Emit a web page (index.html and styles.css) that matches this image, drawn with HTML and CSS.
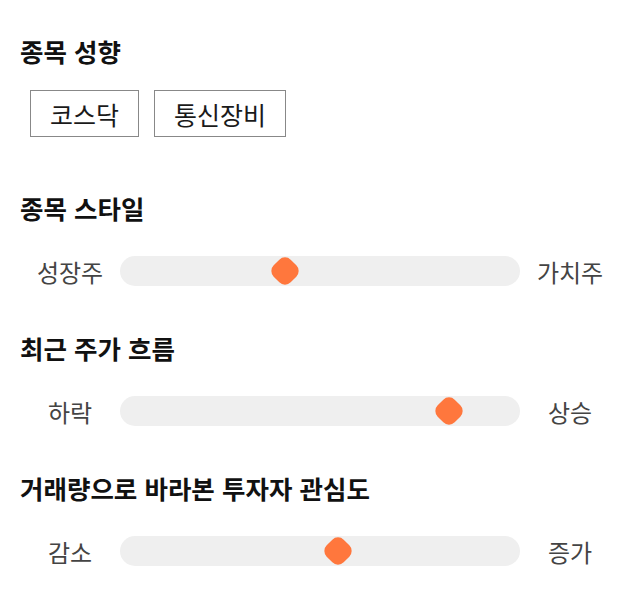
FILE: index.html
```html
<!DOCTYPE html>
<html lang="ko">
<head>
<meta charset="utf-8">
<link rel="stylesheet" href="styles.css">
</head>
<body>
<div class="page">
  <section class="section first">
    <h2 class="title">종목 성향</h2>
    <div class="tags">
      <span class="tag">코스닥</span>
      <span class="tag">통신장비</span>
    </div>
  </section>
  <section class="section">
    <h2 class="title">종목 스타일</h2>
    <div class="slider">
      <span class="label">성장주</span>
      <div class="track"><span class="thumb" style="left:165px"></span></div>
      <span class="label">가치주</span>
    </div>
  </section>
  <section class="section">
    <h2 class="title">최근 주가 흐름</h2>
    <div class="slider">
      <span class="label">하락</span>
      <div class="track"><span class="thumb" style="left:329px"></span></div>
      <span class="label">상승</span>
    </div>
  </section>
  <section class="section">
    <h2 class="title">거래량으로 바라본 투자자 관심도</h2>
    <div class="slider">
      <span class="label">감소</span>
      <div class="track"><span class="thumb" style="left:218px"></span></div>
      <span class="label">증가</span>
    </div>
  </section>
</div>
</body>
</html>
```

FILE: styles.css
```css
html, body {
  margin: 0;
  padding: 0;
  background: #ffffff;
}

.page {
  padding: 31px 20px 0 20px;
  font-family: "Noto Sans CJK KR", "Noto Sans", sans-serif;
  color: #111111;
}

.section {
  margin-bottom: 32px;
}

.section.first {
  margin-bottom: 51px;
}

.title {
  margin: 0;
  height: 40px;
  line-height: 40px;
  font-size: 25.5px;
  font-weight: 700;
  color: #111111;
}

.tags {
  display: flex;
  gap: 15px;
  margin: 19px 0 0 10px;
}

.tag {
  display: flex;
  align-items: center;
  justify-content: center;
  height: 45px;
  padding: 0 19px;
  border: 1px solid #888888;
  font-size: 25px;
  color: #1a1a1a;
}

.slider {
  display: flex;
  align-items: center;
  height: 50px;
  margin-top: 18px;
}

.label {
  width: 100px;
  text-align: center;
  font-size: 24px;
  color: #444444;
}

.track {
  position: relative;
  width: 400px;
  height: 30px;
  border-radius: 15px;
  background: #efefef;
}

.thumb {
  position: absolute;
  top: 15px;
  width: 24px;
  height: 24px;
  margin: -12px 0 0 -12px;
  border-radius: 8px;
  background: #ff773d;
  transform: rotate(45deg);
}
```
